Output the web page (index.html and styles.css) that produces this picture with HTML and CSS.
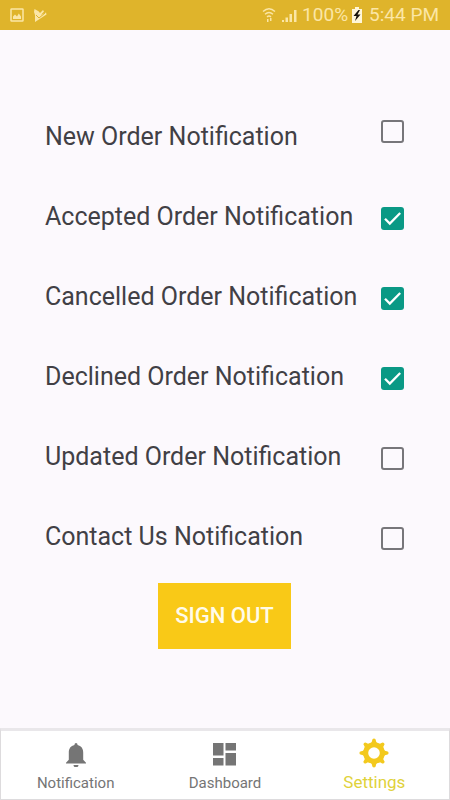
FILE: index.html
```html
<!DOCTYPE html>
<html lang="en">
<head>
<meta charset="utf-8">
<title>Settings</title>
<link rel="stylesheet" href="styles.css">
</head>
<body>
<header class="status">
  <svg class="status-image" width="14" height="14" viewBox="0 0 14 14"><rect x="1" y="1" width="12" height="12" rx=".6" fill="none" stroke="currentColor" stroke-width="1.5"/><path d="M3 11V8.5l2-2 2 2 1.800-3L11 8.500V11z" fill="currentColor"/></svg>
  <svg class="status-play" width="14" height="15" viewBox="0 0 14 15"><path d="M1.500 1l4 2.200L7 5l3-3 1 1.500L8 7l5-2.500.5 2L2 14V7L1 4z" fill="currentColor"/><path d="M3 7l3 3 6-5" fill="none" stroke="#dfb42b" stroke-width="1"/></svg>
  <span class="spacer"></span>
  <svg class="status-wifi" width="14" height="16" viewBox="0 0 14 16"><g fill="none" stroke="currentColor" stroke-width="1.400"><path d="M1 4.500Q7-1 13 4.500M3 7.300q4-3.400 8 0M5 10q2-1.800 4 0"/></g><path d="M5 12h1.500v3H5zM8 11h1.500v3H8z" fill="currentColor"/></svg>
  <svg class="status-signal" width="15" height="14" viewBox="0 0 15 14"><path d="M0 11h2v2H0zM3.500 8.500H6V13H3.500zM7.500 5H10v8H7.500zM12 1h2.500v12H12z" fill="currentColor"/></svg>
  <span class="percent">100%</span>
  <svg class="status-battery" width="10" height="16" viewBox="0 0 10 16"><path d="M3 0h4v2h3v14H0V2h3z" fill="#fff6d8"/><path d="M6.500 3L1.500 9h3L3 14l5.500-6.500h-3L8 3z" fill="#16120a"/></svg>
  <span class="time">5:44 PM</span>
</header>
<main class="content">
  <label class="row row-first"><span class="name">New Order Notification</span><span class="box"></span></label>
  <label class="row"><span class="name">Accepted Order Notification</span><span class="box checked"><svg width="23" height="23" viewBox="0 0 23 23"><path d="M4 11.700l4.800 4.800L19.200 6"/></svg></span></label>
  <label class="row"><span class="name">Cancelled Order Notification</span><span class="box checked"><svg width="23" height="23" viewBox="0 0 23 23"><path d="M4 11.700l4.800 4.800L19.200 6"/></svg></span></label>
  <label class="row"><span class="name">Declined Order Notification</span><span class="box checked"><svg width="23" height="23" viewBox="0 0 23 23"><path d="M4 11.700l4.800 4.800L19.200 6"/></svg></span></label>
  <label class="row"><span class="name">Updated Order Notification</span><span class="box"></span></label>
  <label class="row"><span class="name">Contact Us Notification</span><span class="box"></span></label>
  <button class="signout">SIGN OUT</button>
</main>
<nav class="tabs">
  <a class="tab"><svg class="icon" width="20" height="25" viewBox="0 0 20 25"><path d="M8.500 2.500a1.500 1.500 0 0 1 3 0v.6c3.800.8 5.700 3.700 5.700 7.400v7.200l2.800 3v.8H0v-.8l2.800-3v-7.200c0-3.700 1.900-6.600 5.700-7.400zM7.500 23h5a2.500 2.300 0 0 1-5 0z"/></svg><span>Notification</span></a>
  <a class="tab"><svg class="icon" width="23" height="25" viewBox="0 0 23 25"><path d="M0 1h10.500v12.500H0zM12.500 1H23v7.500H12.500zM0 16h10.500v7.500H0zM12.500 11H23v12.500H12.500z"/></svg><span>Dashboard</span></a>
  <a class="tab active"><svg class="icon" width="30" height="30" viewBox="-15 -15 30 30">
    <circle r="8.300" fill="none" stroke="currentColor" stroke-width="5"/>
    <g id="teeth"><path d="M-4-9.500Q-1.800-10.500-1.800-12.800a1.800 1.800 0 0 1 3.600 0Q1.800-10.500 4-9.500z"/><path transform="rotate(45)" d="M-4-9.500Q-1.800-10.500-1.800-12.300a1.800 1.800 0 0 1 3.600 0Q1.800-10.500 4-9.500z"/></g>
    <use href="#teeth" transform="rotate(90)"/><use href="#teeth" transform="rotate(180)"/><use href="#teeth" transform="rotate(270)"/>
  </svg><span>Settings</span></a>
</nav>
</body>
</html>
```
FILE: styles.css
```css
* { box-sizing: border-box; }
body {
  margin: 0;
  width: 450px;
  height: 800px;
  display: flex;
  flex-direction: column;
  overflow: hidden;
  background: #fcf9fd;
  font-family: Roboto, "Liberation Sans", sans-serif;
}
.status {
  height: 30px;
  flex: none;
  display: flex;
  align-items: center;
  padding: 0 11px 0 10px;
  background: #dfb42b;
  color: #fbe6a6;
  font-size: 19px;
  line-height: 30px;
  white-space: nowrap;
}
.status-play { margin-left: 9px; }
.spacer { flex: 1; }
.status-signal { margin: 2px 5px 0 6px; }
.status-battery { margin: 0 7px 0 4px; }
.content {
  flex: 1;
  display: flex;
  flex-direction: column;
  padding: 67px 46px 0 45px;
}
.row {
  height: 80px;
  flex: none;
  display: flex;
  align-items: center;
  justify-content: space-between;
}
.name {
  color: #414045;
  font-size: 25px;
  line-height: 30px;
  white-space: nowrap;
}
.box {
  width: 23px;
  height: 23px;
  flex: none;
  margin-top: 3px;
  border: 2px solid #77767a;
  border-radius: 3px;
}
.row-first .box { margin-top: -12px; }
.checked {
  border: 0;
  background: #0a9985;
}
.checked svg {
  display: block;
  fill: none;
  stroke: #fff;
  stroke-width: 2.3;
}
.signout {
  align-self: center;
  width: 133px;
  height: 66px;
  margin: 6px 0 0 0;
  padding: 0;
  border: 0;
  background: #f9c917;
  color: #fffbea;
  font: 500 22px/66px Roboto, "Liberation Sans", sans-serif;
  white-space: nowrap;
}
.tabs {
  height: 72px;
  flex: none;
  display: flex;
  background: #fff;
  border: 1px solid #dddbdd;
  border-top: 3px solid #e9e7ea;
}
.tab {
  flex: 1;
  display: flex;
  flex-direction: column;
  align-items: center;
  padding-top: 11px;
  color: #757575;
  font-size: 15px;
  line-height: 18px;
}
.tab span { margin-top: 7px; }
.icon { flex: none; fill: currentColor; }
.active {
  padding-top: 7px;
  color: #f3c91d;
  font-size: 17px;
  line-height: 20px;
}
.active span { margin-top: 4px; color: #dfd23a; }
```
